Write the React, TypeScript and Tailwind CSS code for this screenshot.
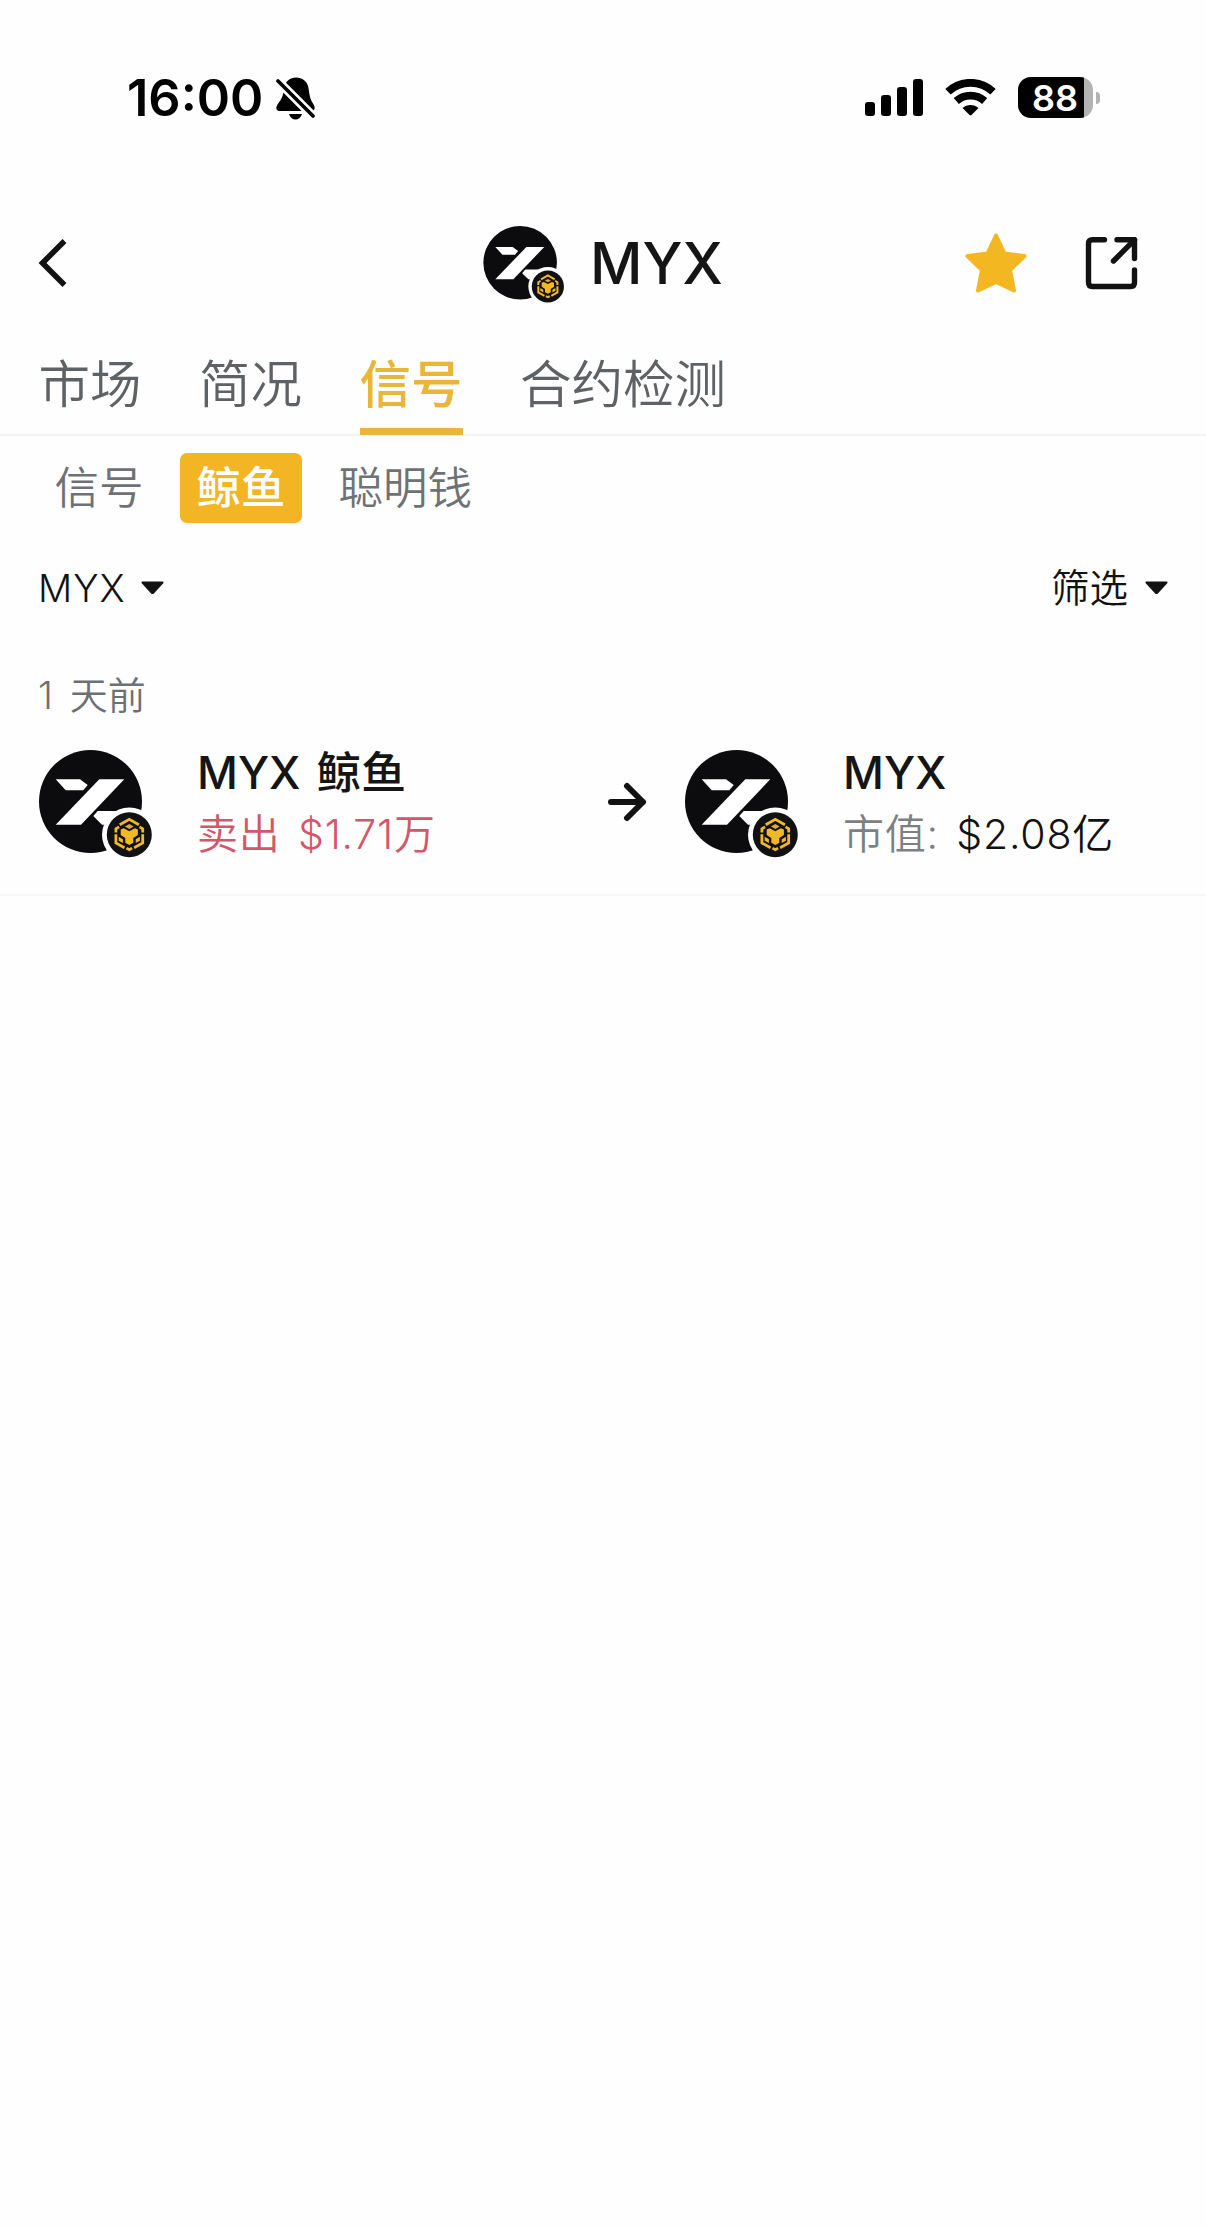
import React from "react";

const tabs = [
  { label: "市场", active: false },
  { label: "简况", active: false },
  { label: "信号", active: true },
  { label: "合约检测", active: false },
];

const subTabs = [
  { label: "信号", active: false },
  { label: "鲸鱼", active: true },
  { label: "聪明钱", active: false },
];

const TokenLogo: React.FC<{ className?: string }> = ({ className }) => (
  <svg viewBox="0 0 118 112" className={className}>
    <circle cx="51.5" cy="51.5" r="51.5" fill="#0c0c0f" />
    <g fill="#fff">
      <path d="M16.7 29.3H41L48.7 35L44.3 40.3H26.7Z" />
      <path d="M60.3 29.3H85.3L42 74.7H16.7Z" />
      <path d="M54.3 66L58.7 61H78L86 74.7H63Z" />
    </g>
    <circle cx="90.3" cy="84.7" r="27.3" fill="#fefefe" />
    <circle cx="90.3" cy="84.7" r="22.5" fill="#111113" />
    <g transform="translate(90.3 84.7)">
      <path d="M-8.6 -5.2L-5.6 -6.4L0 -3.4L5.6 -6.4L8.6 -5.2V0.4L4 3.4V8L0 10.2L-4 8V3.4L-8.6 0.4Z" fill="#f2b826" />
      <path d="M0 -10.6L4.4 -8.2L0 -5.8L-4.4 -8.2Z" fill="#e3aa24" />
      <g fill="none" stroke="#f2b826" strokeWidth="2.8">
        <path d="M-9.6 -10L0 -15.4L9.6 -10" />
        <path d="M-10.2 -7.8L-13.4 -6V-2.2" />
        <path d="M10.2 -7.8L13.4 -6V-2.2" />
        <path d="M-13.4 -0.4V8.2L-4.8 13" />
        <path d="M13.4 -0.4V8.2L4.8 13" />
        <path d="M-2.8 13.4L0 15L2.8 13.4" />
      </g>
      <path d="M-10.6 2L-6.4 4.6V8.4L-10.6 6Z" fill="#f2b826" />
      <path d="M10.6 2L6.4 4.6V8.4L10.6 6Z" fill="#f2b826" />
    </g>
  </svg>
);

const Caret = () => (
  <svg viewBox="0 0 23 14" className="h-[14px] w-[23px]" fill="#121212">
    <path d="M1.6 0.5H21.4Q23.4 0.8 22 2.6L12.9 12.4Q11.5 13.8 10.1 12.4L1 2.6Q-0.4 0.8 1.6 0.5Z" />
  </svg>
);

const StatusBar = () => (
  <div className="flex h-[194px] items-start justify-between pl-[127px] pr-[106px] pt-[77px]">
    <div className="flex h-[43px] items-center">
      <span className="w-[149px] whitespace-nowrap text-[50.5px] font-semibold leading-none text-black">
        16:00
      </span>
      <svg viewBox="0 0 40 44" className="h-[44px] w-[40px]">
        <path
          d="M20 0.5C14 0.5 9.5 4.5 8.3 10C7.2 18 6.5 21 2.5 26C-1 31 0 34 4 34H34.5C39 34 40 31 37 26.5C34 22 33.5 18 32.5 11C31.5 4.5 26 0.5 20 0.5Z"
          fill="#000"
        />
        <path d="M13 37H26C25 40.5 22.5 42.5 19.5 42.5C16.5 42.5 14 40.5 13 37Z" fill="#000" />
        <path d="M0 2L38 40" stroke="#fefefe" strokeWidth="9" />
        <path d="M2 4L37 39" stroke="#000" strokeWidth="3.6" strokeLinecap="round" />
      </svg>
    </div>
    <div className="flex h-[41px] items-center">
      <div className="mr-[22px] flex h-[37px] items-end gap-[6px]">
        <div className="h-[14px] w-[10px] rounded-[3px] bg-black" />
        <div className="h-[21px] w-[10px] rounded-[3px] bg-black" />
        <div className="h-[29px] w-[10px] rounded-[3px] bg-black" />
        <div className="h-[37px] w-[10px] rounded-[3px] bg-black" />
      </div>
      <svg viewBox="0 0 51 37" className="mr-[22px] h-[37px] w-[51px]">
        <g fill="none" stroke="#000" strokeWidth="7.8">
          <path d="M3 12.8C15.5 0.8 35.5 0.8 48 12.8" />
          <path d="M11.3 22C19.5 14.7 31.5 14.7 39.7 22" />
        </g>
        <path d="M17.5 29C22 25 29 25 33.5 29L26.5 36Q25.5 36.9 24.5 36Z" fill="#000" />
      </svg>
      <div className="flex items-center gap-[3px]">
        <div className="flex h-[41px] w-[75px] items-center overflow-hidden rounded-[13px] bg-[#b3b3b3]">
          <div className="flex h-full w-[66px] items-center justify-center bg-black pl-[8px] text-[36px] font-semibold leading-none text-white">
            88
          </div>
        </div>
        <div className="h-[12px] w-[4px] rounded-r-full bg-[#b3b3b3]" />
      </div>
    </div>
  </div>
);

const Header = () => (
  <header className="flex h-[138px] items-center pl-[38px] pr-[68px]">
    <svg viewBox="0 0 30 50" className="h-[50px] w-[30px]" fill="none" stroke="#121212" strokeWidth="5.6">
      <path d="M26.5 3L4.5 25L26.5 47" strokeLinejoin="miter" strokeLinecap="butt" />
    </svg>
    <div className="ml-[415px] flex items-center">
      <TokenLogo className="mt-[5px] h-[80px] w-[85px]" />
      <h1 className="ml-[22px] mt-[2px] w-[140px] text-[57.5px] font-medium leading-none text-[#151515]">MYX</h1>
    </div>
    <div className="ml-auto flex items-center gap-[57px]">
      <svg viewBox="0 0 64 62" className="h-[62px] w-[64px]">
        <path
          d="M32 3.5L40.5 21.5L60.5 24L46 38L50 58.5L32 50L14 58.5L18 38L3.5 24L23.5 21.5Z"
          fill="#f3b722"
          stroke="#f3b722"
          strokeWidth="4"
          strokeLinejoin="round"
        />
      </svg>
      <svg
        viewBox="0 0 53 53"
        className="h-[53px] w-[53px]"
        fill="none"
        stroke="#121212"
        strokeWidth="5.4"
        strokeLinecap="round"
        strokeLinejoin="round"
      >
        <path d="M19.5 2.8H7.5Q3.5 2.8 3.5 6.8V45.5Q3.5 49.5 7.5 49.5H45.5Q49.5 49.5 49.5 45.5V33" />
        <path d="M32 2.8H49.5V21.5" />
        <path d="M49.5 2.8L28.5 24" />
      </svg>
    </div>
  </header>
);

const TokenCell: React.FC<{ title: string; children: React.ReactNode }> = ({ title, children }) => (
  <div className="flex">
    <TokenLogo className="h-[112px] w-[118px] shrink-0" />
    <div className="ml-[40px] whitespace-nowrap">
      <p className="h-[46px] text-[44.8px] font-medium leading-[46px] text-[#151515] [word-spacing:4px]">{title}</p>
      <p className="mt-[17px] h-[42px] text-[41px] font-[350] leading-[42px] tracking-[0.8px] [word-spacing:5px]">
        {children}
      </p>
    </div>
  </div>
);

const App: React.FC = () => {
  return (
    <main className="flex min-h-[2228px] w-[1206px] flex-col bg-[#fefefe] font-['Inter','Noto_Sans_CJK_SC',sans-serif]">
      <StatusBar />
      <Header />

      <nav className="flex h-[104px] gap-[57.5px] border-b-2 border-[#f4f4f4] pl-[38.5px]">
        {tabs.map((tab) => (
          <div
            key={tab.label}
            className={
              tab.active
                ? "h-[103px] border-b-[7px] border-[#e9b53a] pt-[26px] text-[51.5px] font-medium leading-[52px] text-[#e9b53a]"
                : "pt-[26px] text-[51.5px] font-[350] leading-[52px] text-[#5f6265]"
            }
          >
            {tab.label}
          </div>
        ))}
      </nav>

      <div className="mt-[17px] flex gap-[20px] pl-[38px]">
        {subTabs.map((tab) => (
          <div
            key={tab.label}
            className={
              tab.active
                ? "h-[70px] rounded-[7px] bg-[#f3b524] px-[16.5px] text-[44.5px] font-medium leading-[70px] text-white"
                : "h-[70px] px-[16.5px] text-[44.5px] font-[350] leading-[70px] text-[#6f7275]"
            }
          >
            {tab.label}
          </div>
        ))}
      </div>

      <div className="mt-[40px] flex h-[50px] items-center justify-between pl-[38px] pr-[38px] text-[38px] font-[350] leading-none text-[#121212]">
        <div className="flex items-center gap-[15px]">
          <span className="tracking-[1px]">MYX</span>
          <Caret />
        </div>
        <div className="flex items-center gap-[17px]">
          <span className="text-[38.5px]">筛选</span>
          <Caret />
        </div>
      </div>

      <p className="mt-[57px] h-[51px] pl-[38px] text-[38px] font-[350] leading-[50px] text-[#6c7073] [word-spacing:6px]">
        1 天前
      </p>

      <section className="flex h-[175px] items-start border-b-2 border-[#f6f6f6] pl-[39px] pt-[29px]">
        <div className="w-[568px]">
          <TokenCell title="MYX 鲸鱼">
            <span className="text-[#d4566a]">卖出 $1.71万</span>
          </TokenCell>
        </div>
        <svg
          viewBox="0 0 40 40"
          className="mt-[32px] h-[40px] w-[40px]"
          fill="none"
          stroke="#121212"
          strokeWidth="6"
          strokeLinecap="round"
          strokeLinejoin="round"
        >
          <path d="M4 20H36M20 4L36 20L20 36" />
        </svg>
        <div className="ml-[38px]">
          <TokenCell title="MYX">
            <span className="text-[#7d8083]">市值:</span> <span className="text-[#121212]">$2.08亿</span>
          </TokenCell>
        </div>
      </section>
    </main>
  );
};

export default App;
